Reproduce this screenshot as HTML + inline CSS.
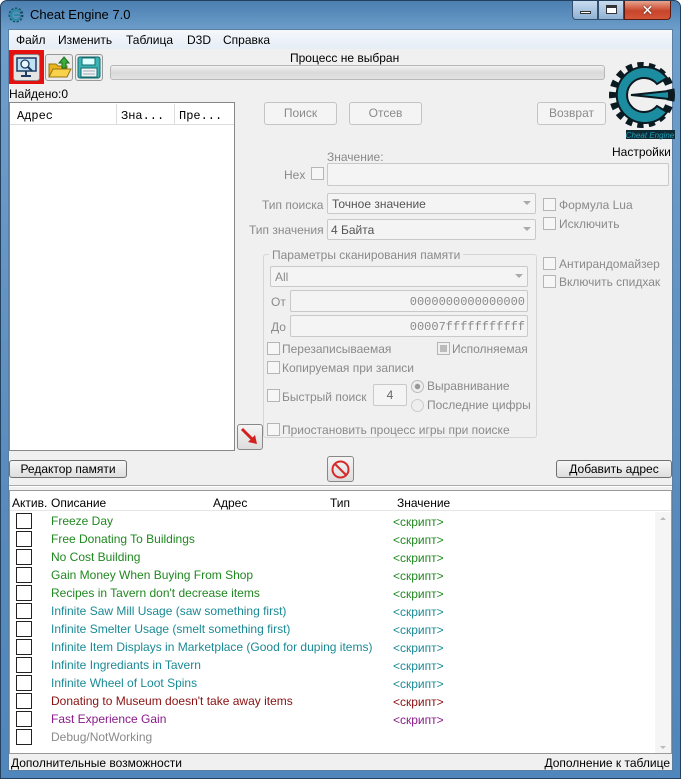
<!DOCTYPE html>
<html><head><meta charset="utf-8"><style>
*{box-sizing:border-box;margin:0;padding:0}
body{width:681px;height:779px;overflow:hidden;font-family:"Liberation Sans","DejaVu Sans",sans-serif;font-size:12px;color:#000;background:#fff}
.win{position:absolute;left:0;top:0;width:681px;height:779px;border-radius:7px 7px 0 0;background:linear-gradient(180deg,#4a7fb0 0,#6f9fcc 30px,#5a8cbd 60%,#4f86bb 100%);border:1px solid #23405e}
.client{position:absolute;left:8px;top:29px;width:665px;height:742px;background:#f0f0f0;border:1px solid #5b7ea3}
.a{position:absolute;white-space:nowrap}
.btn{position:absolute;border:1px solid #707070;border-radius:3px;background:linear-gradient(#f6f6f6,#dedede);text-align:center;line-height:16px}
.dbtn{position:absolute;border:1px solid #c4c4c4;border-radius:3px;background:#f4f4f4;color:#8a8a8a;text-align:center;line-height:20px}
.box{position:absolute;border:1px solid #c9c9c9;border-radius:2px;background:#f4f4f4}
.cb{position:absolute;width:13px;height:13px;border:1px solid #b5b5b5;background:#f6f6f6}
.g{color:#8a8a8a}
.row{position:absolute;left:14px;width:620px;height:18px;white-space:nowrap}
.row .c{position:absolute;left:1px;top:1px;width:16px;height:16px;border:1px solid #222;background:#fff}
.row .t{position:absolute;left:36px;top:1px;line-height:16px;white-space:nowrap}
.row .v{position:absolute;left:378px;top:2px;line-height:16px;white-space:nowrap}
.arrowd{position:absolute;right:4px;top:7px;width:0;height:0;border-left:4px solid transparent;border-right:4px solid transparent;border-top:4px solid #aaa}
</style></head><body>
<div class="win">
 <svg class="a" style="left:7px;top:6px" width="16" height="16" viewBox="0 0 16 16"><circle cx="8" cy="8" r="6" fill="none" stroke="#1a4a60" stroke-width="3" stroke-dasharray="2 1.4"/><path d="M12 5 A5 5 0 1 0 12 11" fill="none" stroke="#2a8aa5" stroke-width="2.5"/><path d="M6 8 L12 8" stroke="#2a8aa5" stroke-width="2"/></svg>
 <div class="a" style="left:29px;top:6px;font-size:13px;color:#000">Cheat Engine 7.0</div>
 <div class="a" style="left:571px;top:0;width:26px;height:19px;border:1px solid #34506e;border-top:none;border-radius:0 0 0 4px;background:linear-gradient(#c9dcef,#8fb1d4)"><div style="position:absolute;left:7px;top:10px;width:11px;height:3px;background:#fff;border:1px solid #333"></div></div>
 <div class="a" style="left:597px;top:0;width:26px;height:19px;border:1px solid #34506e;border-top:none;background:linear-gradient(#c9dcef,#8fb1d4)"><div style="position:absolute;left:7px;top:4px;width:11px;height:9px;border:1px solid #333;border-top-width:3px;background:#fff"></div></div>
 <div class="a" style="left:623px;top:0;width:47px;height:19px;border:1px solid #5a1a10;border-top:none;border-radius:0 0 4px 0;background:linear-gradient(#e8a48e,#c8452a 55%,#d2553a);color:#fff;font-weight:bold;font-size:14px;text-align:center;line-height:18px;text-shadow:0 0 2px #333">✕</div>
</div>
<div class="client">
 <div class="a" style="left:0;top:0;width:663px;height:19px;background:linear-gradient(#f5f8fc,#e6edf6)"></div>
 <div class="a" style="left:7px;top:3px">Файл</div>
 <div class="a" style="left:49px;top:3px">Изменить</div>
 <div class="a" style="left:117px;top:3px">Таблица</div>
 <div class="a" style="left:178px;top:3px">D3D</div>
 <div class="a" style="left:214px;top:3px">Справка</div>
 <div class="a" style="left:0;top:20px;width:35px;height:34px;background:#e51010"></div>
 <div class="a" style="left:4px;top:24px;width:27px;height:27px;border:1px solid #888;border-radius:3px;background:#e4e4e4"></div>
 <svg class="a" style="left:6px;top:26px" width="23" height="22" viewBox="0 0 23 22"><rect x="2" y="2" width="19" height="13" fill="#bfe3f5" stroke="#1d3b63" stroke-width="1.5"/><circle cx="10" cy="8" r="4" fill="#e8f6ff" stroke="#1d3b63" stroke-width="1.3"/><path d="M13 11 L17 15" stroke="#1d3b63" stroke-width="2"/><path d="M11 15 V19 M6 20 H16" stroke="#1d3b63" stroke-width="2"/></svg>
 <div class="a" style="left:36px;top:24px;width:28px;height:27px;border:1px solid #999;border-radius:3px;background:#ececec"></div>
 <svg class="a" style="left:38px;top:26px" width="25" height="23" viewBox="0 0 25 23"><path d="M2 8 H9 L11 10 H20 V21 H2Z" fill="#e6b520" stroke="#9a7410"/><path d="M2 21 L6 13 H24 L20 21Z" fill="#f7d24a" stroke="#9a7410"/><path d="M17 1 L22 7 H19 V12 H15 V7 H12Z" fill="#3aad3a" stroke="#1d6d1d"/></svg>
 <div class="a" style="left:66px;top:24px;width:28px;height:27px;border:1px solid #999;border-radius:3px;background:#ececec"></div>
 <svg class="a" style="left:68px;top:26px" width="24" height="23" viewBox="0 0 24 23"><rect x="1" y="1" width="22" height="21" rx="2" fill="#3bb3b6" stroke="#136b6e"/><rect x="5" y="2" width="13" height="7" fill="#dff" stroke="#136b6e"/><rect x="4" y="12" width="16" height="9" fill="#f2f2f2" stroke="#136b6e"/><path d="M6 15H18M6 18H18" stroke="#9ab"/></svg>
 <div class="a" style="left:281px;top:21px">Процесс не выбран</div>
 <div class="a" style="left:101px;top:35px;width:495px;height:15px;border:1px solid #b8b8b8;border-radius:3px;background:linear-gradient(#f2f2f2,#d9d9d9 50%,#e2e2e2)"></div>
 <div class="a" style="left:0;top:57px">Найдено:0</div>
 <!-- logo -->
 <svg class="a" style="left:600px;top:28px" width="66" height="86" viewBox="0 0 66 86">
  <circle cx="33" cy="37" r="29" fill="none" stroke="#0b1a20" stroke-width="8" stroke-dasharray="6 5"/>
  <path d="M58 20 A28 28 0 1 0 58 54 L48 48 A17 17 0 1 1 48 26 Z" fill="#1c8da0" stroke="#0b1a20" stroke-width="2"/>
  <path d="M22 37 L60 33 L60 41 Z" fill="#1c8da0" stroke="#0b1a20" stroke-width="2"/>
  <rect x="17" y="72" width="49" height="9" fill="#0f2a35"/><text x="41" y="80" font-size="8" fill="#1fa0b5" text-anchor="middle" font-family="Liberation Sans" font-style="italic">Cheat Engine</text></svg>
 <div class="a" style="left:603px;top:115px">Настройки</div>
 <div class="a" style="left:0;top:72px;width:226px;height:349px;border:1px solid #888;background:#fff"></div>
 <div class="a" style="left:1px;top:73px;width:224px;height:22px;background:#fff;border-bottom:1px solid #ddd"></div>
 <div class="a" style="left:8px;top:79px;font-family:'Liberation Mono',monospace;font-size:12px">Адрес</div>
 <div class="a" style="left:107px;top:74px;width:1px;height:20px;background:#ddd"></div>
 <div class="a" style="left:112px;top:79px;font-family:'Liberation Mono',monospace;font-size:12px">Зна...</div>
 <div class="a" style="left:165px;top:74px;width:1px;height:20px;background:#ddd"></div>
 <div class="a" style="left:170px;top:79px;font-family:'Liberation Mono',monospace;font-size:12px">Пре...</div>
 <div class="dbtn" style="left:255px;top:72px;width:73px;height:23px">Поиск</div>
 <div class="dbtn" style="left:340px;top:72px;width:73px;height:23px">Отсев</div>
 <div class="dbtn" style="left:528px;top:72px;width:69px;height:23px">Возврат</div>
 <div class="a g" style="left:318px;top:120px">Значение:</div>
 <div class="a g" style="left:275px;top:138px">Hex</div>
 <div class="cb" style="left:302px;top:137px"></div>
 <div class="box" style="left:318px;top:133px;width:342px;height:23px"></div>
 <div class="a g" style="left:253px;top:168px">Тип поиска</div>
 <div class="box" style="left:318px;top:163px;width:209px;height:21px"><span class="a" style="left:4px;top:3px;color:#555">Точное значение</span><span class="arrowd"></span></div>
 <div class="a g" style="left:240px;top:193px">Тип значения</div>
 <div class="box" style="left:318px;top:189px;width:209px;height:21px"><span class="a" style="left:3px;top:3px;color:#555">4 Байта</span><span class="arrowd"></span></div>
 <div class="cb" style="left:534px;top:168px"></div><div class="a g" style="left:550px;top:168px">Формула Lua</div>
 <div class="cb" style="left:534px;top:187px"></div><div class="a g" style="left:550px;top:187px">Исключить</div>
 <div class="cb" style="left:534px;top:227px"></div><div class="a g" style="left:550px;top:227px">Антирандомайзер</div>
 <div class="cb" style="left:534px;top:245px"></div><div class="a g" style="left:550px;top:245px">Включить спидхак</div>
 <div class="a" style="left:254px;top:224px;width:274px;height:184px;border:1px solid #d5d5d5;border-radius:3px"></div>
 <div class="a g" style="left:260px;top:218px;background:#f0f0f0;padding:0 3px">Параметры сканирования памяти</div>
 <div class="box" style="left:261px;top:236px;width:258px;height:21px"><span class="a g" style="left:4px;top:3px">All</span><span class="arrowd"></span></div>
 <div class="a g" style="left:262px;top:265px">От</div>
 <div class="box" style="left:281px;top:260px;width:238px;height:22px"><span class="a g" style="right:2px;top:4px;font-family:'Liberation Mono',monospace">0000000000000000</span></div>
 <div class="a g" style="left:262px;top:290px">До</div>
 <div class="box" style="left:281px;top:285px;width:238px;height:22px"><span class="a g" style="right:2px;top:4px;font-family:'Liberation Mono',monospace">00007fffffffffff</span></div>
 <div class="cb" style="left:258px;top:312px"></div><div class="a g" style="left:273px;top:312px">Перезаписываемая</div>
 <div class="cb" style="left:428px;top:312px;background:#bbb;box-shadow:inset 0 0 0 2px #f0f0f0"></div><div class="a g" style="left:443px;top:312px">Исполняемая</div>
 <div class="cb" style="left:258px;top:331px"></div><div class="a g" style="left:273px;top:331px">Копируемая при записи</div>
 <div class="cb" style="left:258px;top:359px"></div><div class="a g" style="left:273px;top:360px">Быстрый поиск</div>
 <div class="box" style="left:364px;top:354px;width:34px;height:22px;text-align:center;line-height:20px;color:#666">4</div>
 <div class="a" style="left:402px;top:350px;width:13px;height:13px;border-radius:50%;border:1px solid #bbb;background:radial-gradient(#999 30%,#eee 40%)"></div><div class="a g" style="left:418px;top:349px">Выравнивание</div>
 <div class="a" style="left:402px;top:369px;width:13px;height:13px;border-radius:50%;border:1px solid #ccc;background:#eee"></div><div class="a g" style="left:418px;top:368px">Последние цифры</div>
 <div class="cb" style="left:258px;top:393px"></div><div class="a g" style="left:273px;top:393px">Приостановить процесс игры при поиске</div>
 <div class="a" style="left:228px;top:394px;width:26px;height:26px;border:1px solid #888;border-radius:3px;background:linear-gradient(#f5f5f5,#ddd)"></div>
 <svg class="a" style="left:231px;top:397px" width="20" height="20" viewBox="0 0 20 20"><path d="M2 2 L13 13" stroke="#d32020" stroke-width="3"/><path d="M17 17 L8 15 L15 8Z" fill="#d32020"/></svg>
 <div class="btn" style="left:0;top:430px;width:118px;height:18px">Редактор памяти</div>
 <div class="btn" style="left:547px;top:430px;width:116px;height:18px">Добавить адрес</div>
 <div class="a" style="left:318px;top:426px;width:27px;height:26px;border:1px solid #888;border-radius:3px;background:linear-gradient(#f5f5f5,#ddd)"></div>
 <svg class="a" style="left:321px;top:429px" width="21" height="21" viewBox="0 0 21 21"><circle cx="10.5" cy="10.5" r="8" fill="none" stroke="#d42a2a" stroke-width="2"/><path d="M5 5 L16 16" stroke="#d42a2a" stroke-width="2"/></svg>
 <div class="a" style="left:0;top:455px;width:663px;height:2px;border-top:1px solid #aaa;border-bottom:1px solid #fff"></div>
 <div class="a" style="left:0;top:460px;width:663px;height:264px;border:1px solid #999;background:#fff"></div>
 <div class="a" style="left:1px;top:461px;width:661px;height:20px;border-bottom:1px solid #e5e5e5;background:#fff"></div>
 <div class="a" style="left:3px;top:466px">Актив.</div>
 <div class="a" style="left:42px;top:466px">Описание</div>
 <div class="a" style="left:204px;top:466px">Адрес</div>
 <div class="a" style="left:321px;top:466px">Тип</div>
 <div class="a" style="left:388px;top:466px">Значение</div>
 <div class="a" style="left:646px;top:482px;width:16px;height:241px;background:#f5f5f5"></div>
 <div class="a" style="left:651px;top:487px;border-left:3px solid transparent;border-right:3px solid transparent;border-bottom:3px solid #bbb"></div>
 <div class="a" style="left:651px;top:716px;border-left:3px solid transparent;border-right:3px solid transparent;border-top:3px solid #bbb"></div>
 <div style="position:absolute;left:-8px;top:0">
 <div class="row" style="top:482px;color:#208820"><div class="c"></div><div class="t">Freeze Day</div><div class="v">&lt;скрипт&gt;</div></div>
 <div class="row" style="top:500px;color:#208820"><div class="c"></div><div class="t">Free Donating To Buildings</div><div class="v">&lt;скрипт&gt;</div></div>
 <div class="row" style="top:518px;color:#208820"><div class="c"></div><div class="t">No Cost Building</div><div class="v">&lt;скрипт&gt;</div></div>
 <div class="row" style="top:536px;color:#208820"><div class="c"></div><div class="t">Gain Money When Buying From Shop</div><div class="v">&lt;скрипт&gt;</div></div>
 <div class="row" style="top:554px;color:#208820"><div class="c"></div><div class="t">Recipes in Tavern don't decrease items</div><div class="v">&lt;скрипт&gt;</div></div>
 <div class="row" style="top:572px;color:#1a8a96"><div class="c"></div><div class="t">Infinite Saw Mill Usage (saw something first)</div><div class="v">&lt;скрипт&gt;</div></div>
 <div class="row" style="top:590px;color:#1a8a96"><div class="c"></div><div class="t">Infinite Smelter Usage (smelt something first)</div><div class="v">&lt;скрипт&gt;</div></div>
 <div class="row" style="top:608px;color:#1a8a96"><div class="c"></div><div class="t">Infinite Item Displays in Marketplace (Good for duping items)</div><div class="v">&lt;скрипт&gt;</div></div>
 <div class="row" style="top:626px;color:#1a8a96"><div class="c"></div><div class="t">Infinite Ingrediants in Tavern</div><div class="v">&lt;скрипт&gt;</div></div>
 <div class="row" style="top:644px;color:#1a8a96"><div class="c"></div><div class="t">Infinite Wheel of Loot Spins</div><div class="v">&lt;скрипт&gt;</div></div>
 <div class="row" style="top:662px;color:#8a1010"><div class="c"></div><div class="t">Donating to Museum doesn't take away items</div><div class="v">&lt;скрипт&gt;</div></div>
 <div class="row" style="top:680px;color:#8a1a8a"><div class="c"></div><div class="t">Fast Experience Gain</div><div class="v">&lt;скрипт&gt;</div></div>
 <div class="row" style="top:698px;color:#8a8a8a"><div class="c"></div><div class="t">Debug/NotWorking</div></div>
 </div>
 <div class="a" style="left:2px;top:726px">Дополнительные возможности</div>
 <div class="a" style="right:2px;top:726px">Дополнение к таблице</div>
</div>
</body></html>
